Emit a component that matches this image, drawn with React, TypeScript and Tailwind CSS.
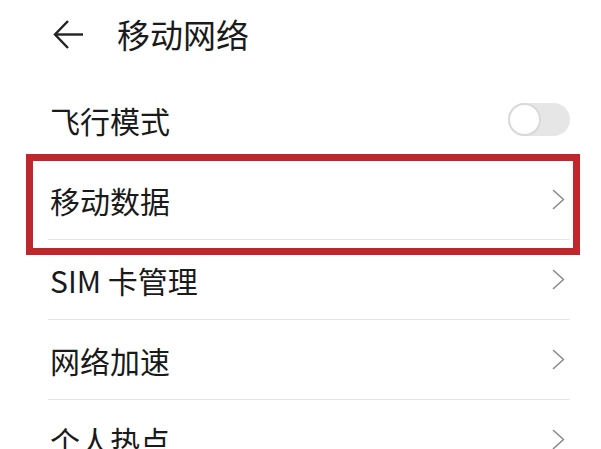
import React from 'react';

const FONT = '"Noto Sans CJK SC", "Noto Sans", sans-serif';

type Row = { label: string; kind: 'toggle' | 'link' };

const rows: Row[] = [
  { label: '飞行模式', kind: 'toggle' },
  { label: '移动数据', kind: 'link' },
  { label: 'SIM 卡管理', kind: 'link' },
  { label: '网络加速', kind: 'link' },
  { label: '个人热点', kind: 'link' },
];

const Chevron = () => (
  <svg width="13" height="21" viewBox="0 0 13 21" fill="none" className="mr-[5px] shrink-0">
    <polyline points="1.5,1.5 11.5,10.5 1.5,19.5" stroke="#8a8a8a" strokeWidth="1.6" strokeLinejoin="round" strokeLinecap="round" />
  </svg>
);

const Toggle = () => (
  <div className="relative w-[62px] h-[33px] rounded-full bg-[#e6e6e6] shrink-0">
    <div className="absolute left-0 top-0 w-[33px] h-[33px] rounded-full bg-white border-[2px] border-[#d9d9d9]" />
  </div>
);

export default function App() {
  return (
    <div className="relative w-[601px] h-[449px] overflow-hidden bg-white text-[#1a1a1a]" style={{ fontFamily: FONT }}>
      {/* header */}
      <div className="flex items-center h-[68px] pl-[53px]">
        <svg width="31" height="31" viewBox="0 0 31 31" fill="none">
          <line x1="2" y1="15.5" x2="30" y2="15.5" stroke="#222" strokeWidth="2.4" />
          <polyline points="15,2 2,15.5 15,29" stroke="#222" strokeWidth="2.4" strokeLinejoin="miter" />
        </svg>
        <h1 className="ml-[33px] text-[33px] leading-none font-normal tracking-normal">移动网络</h1>
      </div>

      {/* settings list */}
      <div className="mt-[12px] ml-[48px] mr-[31px]">
        {rows.map((row) => (
          <div key={row.label} className="flex items-center justify-between h-[80px] border-b border-[#e4e4e4]">
            <span className="pl-[2px] text-[30px] leading-none">{row.label}</span>
            {row.kind === 'toggle' ? <Toggle /> : <Chevron />}
          </div>
        ))}
      </div>

      {/* red highlight annotation */}
      <div className="absolute left-[26px] top-[154px] w-[554px] h-[101px] border-[7px] border-[#c1262d]" />
    </div>
  );
}
